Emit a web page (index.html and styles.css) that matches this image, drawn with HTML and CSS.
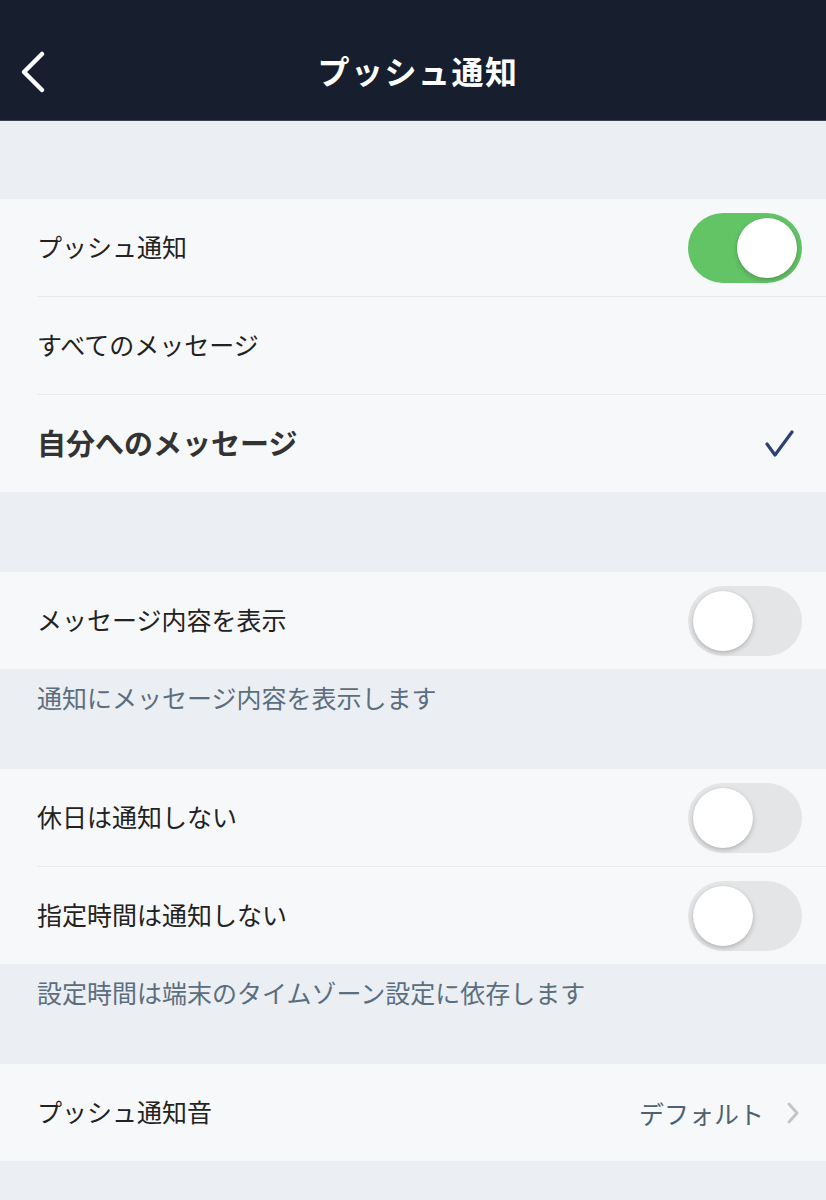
FILE: index.html
```html
<!DOCTYPE html>
<html lang="ja">
<head>
<meta charset="utf-8">
<link rel="stylesheet" href="styles.css">
</head>
<body>
<header class="nav">
  <svg class="back" viewBox="0 0 30 44" width="30" height="44"><path d="M24 4 L6 22 L24 40" fill="none" stroke="#fff" stroke-width="4.5" stroke-linecap="round" stroke-linejoin="round"/></svg>
  <h1 class="title">プッシュ通知</h1>
</header>
<div class="gap first"></div>
<section class="group">
  <div class="row"><span class="label">プッシュ通知</span><span class="toggle on"><span class="knob"></span></span></div>
  <div class="row"><span class="label">すべてのメッセージ</span></div>
  <div class="row"><span class="label bold">自分へのメッセージ</span>
    <svg class="check" viewBox="0 0 30 28" width="30" height="28"><path d="M3 14 L11 25 L28 2" fill="none" stroke="#2c4270" stroke-width="3.2" stroke-linecap="round" stroke-linejoin="round"/></svg>
  </div>
</section>
<div class="gap"></div>
<section class="group">
  <div class="row"><span class="label">メッセージ内容を表示</span><span class="toggle"><span class="knob"></span></span></div>
</section>
<div class="note">通知にメッセージ内容を表示します</div>
<section class="group">
  <div class="row"><span class="label">休日は通知しない</span><span class="toggle"><span class="knob"></span></span></div>
  <div class="row"><span class="label">指定時間は通知しない</span><span class="toggle"><span class="knob"></span></span></div>
</section>
<div class="note">設定時間は端末のタイムゾーン設定に依存します</div>
<section class="group">
  <div class="row"><span class="label">プッシュ通知音</span>
    <span class="value">デフォルト<svg class="chev" viewBox="0 0 14 24" width="14" height="24"><path d="M3 3 L11 12 L3 21" fill="none" stroke="#c3c5c8" stroke-width="3" stroke-linecap="round" stroke-linejoin="round"/></svg></span>
  </div>
</section>
<div class="gap last"></div>
</body>
</html>
```
FILE: styles.css
```css
html, body {
  margin: 0;
  padding: 0;
  background: #ebeef2;
  font-family: "Noto Sans CJK JP", "Noto Sans", sans-serif;
}
.nav {
  height: 121px;
  box-sizing: border-box;
  padding-top: 20px;
  background: #171f2e;
  border-bottom: 1px solid #3b4352;
  display: flex;
  align-items: center;
  justify-content: center;
  position: relative;
}
.back {
  position: absolute;
  left: 18px;
  top: 50px;
}
.title {
  margin: 0 0 0 10px;
  color: #fff;
  font-size: 32px;
  line-height: 40px;
  font-weight: 700;
  letter-spacing: 1.5px;
}
.gap { height: 80px; }
.gap.first { height: 78px; }
.gap.last { height: 40px; }
.group {
  background: #f7f8fa;
}
.row {
  height: 97px;
  margin-left: 37px;
  padding-right: 24px;
  display: flex;
  align-items: center;
  justify-content: space-between;
  box-sizing: border-box;
}
.row + .row {
  border-top: 1px solid #e9ebee;
  height: 98px;
}
.label {
  font-size: 25px;
  color: #222;
  line-height: 30px;
  margin-top: -3px;
}
.label.bold {
  font-size: 29px;
  font-weight: 700;
  color: #333;
}
.toggle {
  width: 114px;
  height: 70px;
  border-radius: 35px;
  background: #e4e5e7;
  position: relative;
}
.toggle.on {
  background: #63c466;
}
.knob {
  position: absolute;
  top: 5px;
  left: 5px;
  width: 60px;
  height: 60px;
  border-radius: 50%;
  background: #fff;
  box-shadow: 0 2px 5px rgba(0,0,0,0.22), 0 0 1px rgba(0,0,0,0.1);
}
.toggle.on .knob {
  left: 49px;
}
.check {
  margin-right: 8px;
}
.value {
  display: flex;
  align-items: center;
  font-size: 25px;
  color: #4e6272;
  line-height: 30px;
}
.chev {
  margin-left: 22px;
  margin-right: 2px;
}
.note {
  height: 100px;
  box-sizing: border-box;
  padding: 13px 37px 0;
  font-size: 25px;
  line-height: 30px;
  color: #5b6e80;
}
```
